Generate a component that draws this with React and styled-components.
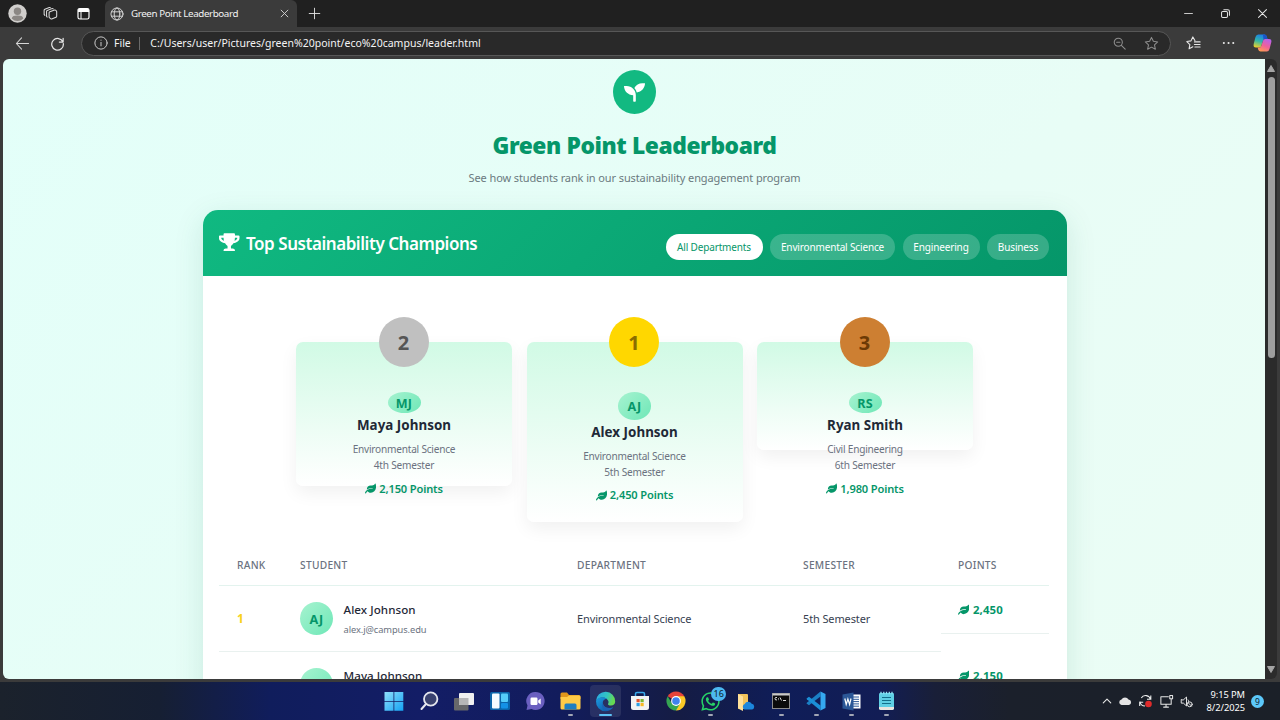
import React from "react";
import styled, { createGlobalStyle, css } from "styled-components";
import { FaSeedling, FaTrophy, FaLeaf, FaWhatsapp } from "react-icons/fa";

const Global = createGlobalStyle`
  * { box-sizing: border-box; }
  body { margin: 0; overflow: hidden; background: #3b3b3b; }
`;

const ui = `"Noto Sans", "Open Sans", sans-serif`;

const Desktop = styled.div`
  width: 1280px;
  height: 720px;
  display: flex;
  flex-direction: column;
  overflow: hidden;
  font-family: ${ui};
  background: #3b3b3b;
`;

/* ---------- browser chrome ---------- */
const TitleBar = styled.header`
  height: 27px;
  display: flex;
  align-items: center;
  background: #202020;
`;
const LeftTools = styled.div`
  width: 105px;
  height: 27px;
  padding-left: 1px;
  display: flex;
  align-items: center;
`;
const ToolSlot = styled.div`
  width: 33px;
  display: flex;
  justify-content: center;
`;
const Tab = styled.div`
  width: 192px;
  height: 27px;
  padding: 0 8px 0 5px;
  display: flex;
  align-items: center;
  border-radius: 6px 6px 0 0;
  background: #3b3b3b;
  color: #f2f2f2;
`;
const TabTitle = styled.span`
  flex: 1;
  margin-left: 7px;
  font-size: 9.8px;
  letter-spacing: -0.4px;
  white-space: nowrap;
`;
const NewTab = styled.div`
  margin-left: 11px;
  display: flex;
`;
const WindowButtons = styled.div`
  margin-left: auto;
  margin-right: 13.5px;
  display: flex;
  gap: 28px;
  align-items: center;
`;
const Toolbar = styled.div`
  height: 32px;
  display: flex;
  align-items: center;
  padding-left: 15px;
  background: #3b3b3b;
`;
const NavButtons = styled.div`
  width: 66px;
  display: flex;
  gap: 20px;
  align-items: center;
`;
const Address = styled.div`
  width: 1090px;
  height: 25px;
  padding: 0 11px 0 12px;
  display: flex;
  align-items: center;
  border: 1px solid #575757;
  border-radius: 13px;
  background: #292929;
  color: #f4f4f4;
  font-size: 10.5px;
`;
const Scheme = styled.span`
  margin-left: 6px;
`;
const Divider = styled.span`
  width: 1px;
  height: 13px;
  margin: 0 10px 0 8.5px;
  background: #6a6a6a;
`;
const Url = styled.span`
  flex: 1;
  letter-spacing: 0.015px;
  white-space: nowrap;
`;
const AddressActions = styled.div`
  display: flex;
  gap: 18px;
  align-items: center;
`;
const ToolbarActions = styled.div`
  display: flex;
  align-items: center;
  gap: 21px;
  margin-left: 15px;
  svg:last-child { margin-left: -3px; }
`;

/* ---------- viewport ---------- */
const Window = styled.div`
  height: 623px;
  padding: 0 3px 3px;
  display: flex;
`;
const Page = styled.main`
  width: 1262px;
  height: 620px;
  padding: 11px 0 0 1px;
  display: flex;
  flex-direction: column;
  align-items: center;
  overflow: hidden;
  border-radius: 6px 0 0 6px;
  background: linear-gradient(135deg, #e3fff9 0%, #e8fdf6 60%, #ebfdf5 100%);
`;
const Scrollbar = styled.div`
  width: 12px;
  height: 620px;
  padding: 6px 0 6px;
  display: flex;
  flex-direction: column;
  align-items: center;
  border-radius: 0 6px 6px 0;
  background: #2b2b2b;
`;
const ScrollThumb = styled.div`
  width: 7px;
  height: 281px;
  margin-top: 5px;
  margin-bottom: auto;
  border-radius: 4px;
  background: #9f9f9f;
`;
const Logo = styled.div`
  width: 43px;
  height: 44px;
  flex: none;
  display: flex;
  align-items: center;
  justify-content: center;
  border-radius: 50%;
  background: #12b981;
  color: #fff;
  font-size: 21px;
`;
const PageTitle = styled.h1`
  margin: 16px 0 0;
  font-size: 22.8px;
  line-height: 32px;
  font-weight: 900;
  letter-spacing: -0.42px;
  color: #059669;
  white-space: nowrap;
`;
const Subtitle = styled.p`
  margin: 6px 0 0;
  font-size: 11px;
  line-height: 19px;
  letter-spacing: -0.11px;
  color: #6b7a80;
  white-space: nowrap;
`;
const BoardShadow = styled.div`
  flex: none;
  border-radius: 15px;
  margin-top: 23px;
  box-shadow: 0 8px 30px rgba(5, 110, 80, 0.13);
`;
const Board = styled.section`
  width: 864px;
  height: 640px;
  border-radius: 15px 15px 0 0;
  overflow: hidden;
  background: #fff;
`;
const BoardHeader = styled.div`
  height: 66px;
  padding: 0 17.5px 0 16.5px;
  display: flex;
  justify-content: space-between;
  color: #fff;
  background: linear-gradient(135deg, #10b981 0%, #059669 100%);
`;
const BoardTitle = styled.h2`
  margin: 0;
  display: flex;
  align-items: center;
  gap: 6.5px;
  height: 66px;
  font-size: 17px;
  font-weight: 600;
  letter-spacing: -0.45px;
  white-space: nowrap;
  svg { font-size: 18.5px; width: 20.5px; position: relative; top: -1px; }
`;
const Filters = styled.div`
  display: flex;
  gap: 7.5px;
  padding-top: 23.5px;
`;
const Pill = styled.button`
  width: ${(p) => p.$w}px;
  height: 26px;
  padding: 0;
  border: 0;
  border-radius: 13px;
  font-family: inherit;
  font-size: 10px;
  letter-spacing: -0.15px;
  white-space: nowrap;
  background: ${(p) => (p.$active ? "#fff" : "rgba(255,255,255,0.2)")};
  color: ${(p) => (p.$active ? "#059669" : "#fff")};
`;

/* ---------- podium ---------- */
const Podium = styled.div`
  height: 246px;
  padding-top: 66px;
  display: flex;
  justify-content: center;
  gap: 14.5px;
`;
const PodiumCard = styled.article`
  position: relative;
  width: 216px;
  height: ${(p) => p.$h}px;
  padding-top: 50px;
  display: flex;
  flex-direction: column;
  align-items: center;
  border-radius: 7px;
  background: linear-gradient(to bottom, #d1fae5, #ffffff);
  box-shadow: 0 7px 18px rgba(0, 0, 0, 0.06);
  white-space: nowrap;
`;
const tones = {
  gold: ["#ffd700", "#8a6d00"],
  silver: ["#c0c0c0", "#555555"],
  bronze: ["#cd7f32", "#6b3a05"],
};
const RankBadge = styled.div`
  position: absolute;
  top: -25px;
  left: 82.5px;
  width: 50px;
  height: 50px;
  padding-top: 1px;
  border-radius: 50%;
  text-align: center;
  line-height: 50px;
  font-size: 20px;
  font-weight: 700;
  background: ${(p) => tones[p.$tone][0]};
  color: ${(p) => tones[p.$tone][1]};
`;
const Avatar = styled.div`
  width: 33px;
  height: ${(p) => p.$h}px;
  flex: none;
  padding-top: 1px;
  display: flex;
  align-items: center;
  justify-content: center;
  border-radius: 50%;
  background: linear-gradient(135deg, #a7f3d0, #6ee7b7);
  color: #059669;
  font-size: 12.6px;
  font-weight: 700;
  letter-spacing: 0.2px;
`;
const PodiumName = styled.h3`
  margin: 2px 0 0;
  font-size: 13.4px;
  line-height: 20px;
  font-weight: 700;
  letter-spacing: 0.02px;
  color: #1f2937;
`;
const PodiumInfo = styled.p`
  margin: 6px 0 0;
  text-align: center;
  font-size: 10.1px;
  line-height: 16.4px;
  letter-spacing: -0.22px;
  color: #6b7280;
`;
const PodiumPoints = styled.div`
  margin-top: 6px;
  display: flex;
  align-items: center;
  gap: 3px;
  line-height: 18px;
  font-size: 11.1px;
  font-weight: 600;
  letter-spacing: -0.14px;
  color: #059669;
`;

/* ---------- table ---------- */
const Table = styled.div`
  width: 830px;
  margin: 0 auto 0 16.5px;
`;
const Row = styled.div`
  display: grid;
  grid-template-columns: 63px 277px 226px 156px 108px;
  align-items: start;
`;
const HeadCell = styled.div`
  height: 41px;
  margin-top: 23px;
  padding-left: 18px;
  border-bottom: 1px solid #e3f3ee;
  font-size: 10.2px;
  line-height: 41px;
  font-weight: 500;
  letter-spacing: 0.28px;
  color: #6b7280;
  &:last-child { padding-left: 17px; }
`;
const Cell = styled.div`
  height: 66px;
  padding-left: 18px;
  display: flex;
  align-items: center;
  border-bottom: 1px solid #e9f1ef;
  font-size: 11px;
  letter-spacing: -0.12px;
  color: #374151;
  white-space: nowrap;
  ${(p) => p.$rank && css`color: ${p.$rank}; font-weight: 700; font-size: 12px;`}
`;
const PointsCell = styled(Cell)`
  height: 48px;
  padding-left: 17px;
  gap: 3.5px;
  font-size: 11.4px;
  letter-spacing: 0.15px;
  font-weight: 700;
  color: #059669;
`;
const Person = styled.div`
  margin-left: 10.5px;
  padding-top: 1px;
`;
const PersonName = styled.div`
  font-size: 11.6px;
  line-height: 20px;
  font-weight: 500;
  letter-spacing: 0.06px;
  color: #1f2937;
`;
const Email = styled.div`
  font-size: 9.3px;
  line-height: 19px;
  letter-spacing: -0.08px;
  color: #6b7280;
`;

/* ---------- taskbar ---------- */
const Taskbar = styled.footer`
  height: 38px;
  display: flex;
  align-items: center;
  background: linear-gradient(90deg, #1b222c 0, #161f33 160px, #101d5c 270px, #131d66 420px, #121c5c 560px, #151c44 680px, #0f1d58 780px, #121d55 880px, #191f38 935px, #1b202b 1010px, #1b2028 100%);
`;
const Apps = styled.div`
  display: flex;
  margin-left: 376.5px;
`;
const AppSlot = styled.div`
  position: relative;
  width: 35.2px;
  height: 38px;
  display: flex;
  align-items: center;
  justify-content: center;
  &::before {
    content: "";
    position: absolute;
    inset: 3px 2px 3px;
    border-radius: 4px;
    background: ${(p) => (p.$active ? "rgba(255,255,255,0.09)" : "none")};
  }
  &::after {
    content: "";
    position: absolute;
    bottom: 4px;
    width: ${(p) => (p.$active ? 13 : p.$open ? 5 : 0)}px;
    height: 2px;
    border-radius: 1px;
    background: ${(p) => (p.$active ? "#5cc3f7" : "#a2a6b5")};
  }
  svg { position: relative; }
`;
const Count = styled.span`
  position: absolute;
  top: 5px;
  left: 18px;
  width: 15px;
  height: 14px;
  border-radius: 7px;
  text-align: center;
  font-size: 9px;
  line-height: 14px;
  background: #4cb8f0;
  color: #0c1b2a;
`;
const Tray = styled.div`
  margin-left: auto;
  margin-right: 16px;
  display: flex;
  align-items: center;
  gap: 6px;
`;
const Clock = styled.div`
  width: 43px;
  margin-left: 3.5px;
  text-align: right;
  font-size: 9.3px;
  line-height: 13px;
  letter-spacing: -0.05px;
  color: #fff;
  white-space: nowrap;
`;
const Notice = styled.div`
  width: 13px;
  height: 13px;
  border-radius: 50%;
  text-align: center;
  font-size: 8.5px;
  line-height: 13px;
  background: #5cc8fa;
  color: #10202c;
`;

/* ---------- drawings ---------- */
const Line = ({ w = 14, h, vb = "0 0 16 16", c = "#e6e6e6", sw = 1.1, children }) => (
  <svg width={w} height={h || w} viewBox={vb} fill="none" stroke={c} strokeWidth={sw} strokeLinecap="round" strokeLinejoin="round">
    {children}
  </svg>
);
const Profile = () => (
  <svg width="19" height="19" viewBox="0 0 19 19">
    <circle cx="9.5" cy="9.5" r="9.2" fill="#d0cecc" />
    <circle cx="9.5" cy="7.3" r="3.7" fill="#8b8784" />
    <path d="M3.7 14.5c.5-2.4 2.4-3 5.8-3s5.300.6 5.800 3a7.800 7.800 0 0 1-11.600 0Z" fill="#8b8784" />
  </svg>
);
const Workspaces = () => (
  <Line w={15} c="#dcdcdc" sw={1.1}>
    <path d="M6.500 7.300q0-.8.800-1.100l5-1.900q1-.3 1.600.5l.7 1v5.200q0 .8-.8 1.100l-4.500 1.700q-1 .3-1.600-.5L6.500 12Z" />
    <path d="M4.500 11.800 3.800 11V5.800q0-.8.700-1.100l5-1.900q.8-.2 1.400.3M2 10 1.200 9V4.500q0-.8.800-1.100L6.700 1.600q.8-.2 1.300.3" />
  </Line>
);
const TabsIcon = () => (
  <svg width="13" height="13" viewBox="0 0 13 13">
    <rect x="1" y="1.500" width="11" height="10.500" rx="1.800" fill="none" stroke="#fff" strokeWidth="1.200" />
    <path d="M1 3.500q0-2 2-2h7q2 0 2 2V5H1Z" fill="#fff" />
    <path d="M4 5v7" stroke="#fff" strokeWidth="1" />
  </svg>
);
const Globe = () => (
  <Line w={14} c="#d8d8d8">
    <circle cx="8" cy="8" r="6.900" />
    <ellipse cx="8" cy="8" rx="3.200" ry="6.900" />
    <path d="M1.700 5.500h12.600M1.700 10.500h12.600" />
  </Line>
);
const Store = () => (
  <svg width="20" height="20" viewBox="0 0 20 20">
    <path d="M5.500 6V2.800Q5.500 1.500 7 1.500h6q1.500 0 1.500 1.300V6" fill="none" stroke="#39a9ea" strokeWidth="1.500" />
    <path d="M1 5h18v11.500q0 2.500-2.500 2.500h-13Q1 19 1 16.500Z" fill="#f3f3f3" />
    <path d="M6.500 8h3.200v3.200H6.500Z" fill="#e5532d" /><path d="M10.500 8h3.200v3.200h-3.200Z" fill="#7cb832" />
    <path d="M6.500 12h3.200v3.200H6.500Z" fill="#2ba0e4" /><path d="M10.500 12h3.200v3.200h-3.200Z" fill="#f8b824" />
  </svg>
);
const Start = () => (
  <svg width="20" height="20" viewBox="0 0 20 20">
    <defs><linearGradient id="win" x1="0" y1="0" x2="1" y2="1"><stop stopColor="#8fe0fb" /><stop offset="1" stopColor="#14a2f3" /></linearGradient></defs>
    <path d="M.5 1h9v9h-9ZM10.300 1h9v9h-9ZM.5 10.700h9v9h-9ZM10.300 10.700h9v9h-9Z" fill="url(#win)" />
  </svg>
);
const SearchIcon = () => (
  <svg width="20" height="20" viewBox="0 0 20 20">
    <circle cx="11.700" cy="8" r="6.700" fill="#39416f" stroke="#e4e6ee" strokeWidth="1.800" />
    <path d="m7 13-4.500 5" stroke="#e4e6ee" strokeWidth="2" strokeLinecap="round" />
  </svg>
);
const TaskView = () => (
  <svg width="20" height="19" viewBox="0 0 20 19">
    <rect x="0" y="6" width="14.500" height="12.500" rx="1" fill="#66676a" />
    <rect x="5" y="1" width="15" height="12" rx="1" fill="#f0f0f0" />
    <path d="M5 6h9.500v7H6q-1 0-1-1Z" fill="#b6b6b7" />
  </svg>
);
const Widgets = () => (
  <svg width="20" height="20" viewBox="0 0 20 20">
    <rect y="1" width="20" height="18" rx="1.500" fill="#0b64aa" />
    <rect x="2" y="2.500" width="7.500" height="15" rx="1" fill="#f4fbff" />
    <rect x="11" y="2.500" width="7" height="8.500" rx="1" fill="#55ccfa" />
    <rect x="11" y="12" width="7" height="5.500" rx="1" fill="#1491e6" />
  </svg>
);
const Chat = () => (
  <svg width="20" height="20" viewBox="0 0 20 20">
    <path d="M10.500 1a9 9 0 1 1-4 17L1.500 19l1-4.500A9 9 0 0 1 10.500 1Z" fill="#6a5fc0" />
    <rect x="5.500" y="6.500" width="7" height="7.500" rx="1.200" fill="#fff" />
    <path d="m13.200 9.500 2.500-2v6l-2.500-2Z" fill="#fff" />
  </svg>
);
const Folder = () => (
  <svg width="21" height="20" viewBox="0 0 21 20">
    <path d="M.5 3q0-1.500 1.500-1.500h5L9 4h10q1.500 0 1.500 1.500V8H.5Z" fill="#e0961b" />
    <path d="M.5 6H7l2-1.500h10q1.500 0 1.500 1.500v11q0 1.500-1.500 1.500H2Q.5 18.500.5 17Z" fill="#ffcb47" />
    <path d="M4.500 18.500V14q0-1.500 1.500-1.500h9q1.500 0 1.500 1.500v4.500Z" fill="#1f7fc2" />
  </svg>
);
const Edge = () => (
  <svg width="21" height="21" viewBox="0 0 21 21">
    <defs>
      <linearGradient id="edgeTop" x1="0" y1="0" x2="1" y2=".3"><stop stopColor="#2aa6e6" /><stop offset=".6" stopColor="#32c5c2" /><stop offset="1" stopColor="#66d951" /></linearGradient>
      <linearGradient id="edgeLow" x1="0" y1="0" x2="1" y2="1"><stop stopColor="#1b9de2" /><stop offset="1" stopColor="#0b4d9c" /></linearGradient>
    </defs>
    <path d="M1 10a9.600 9.600 0 0 1 19.200.5c0 2.600-1.900 4-4.200 4-2.100 0-3.300-.8-3-1.600.5-.8.700-1.500.5-2.500C12.800 7.500 9 5.500 5.500 6.800 3 7.700 1.500 9 1 10Z" fill="url(#edgeTop)" />
    <path d="M1 10c1-4 8-5.300 11-2-3.300-.2-4.700 2.300-4 5 .9 3.300 5.200 5.300 10.200 3.200a9.600 9.600 0 0 1-7.700 4A9.600 9.600 0 0 1 1 10Z" fill="url(#edgeLow)" />
    <path d="M7.800 12.500c.7 3.900 5.200 5.900 10.400 3.700-2 3.500-7 4.300-9.800 1.500-1.500-1.600-1.500-3.500-.6-5.200Z" fill="#1c62b4" />
  </svg>
);
const Chrome = () => (
  <svg width="20" height="20" viewBox="0 0 20 20">
    <path d="M10 10 1.700 5.200A9.600 9.600 0 0 1 18.300 5.200Z" fill="#e5443a" />
    <path d="M10 10V5.200h8.300A9.600 9.600 0 0 1 10 19.600Z" fill="#fbc926" />
    <path d="M1.700 5.200 5.900 12.400 10 14.600l4.100-2.200L10 19.600A9.600 9.600 0 0 1 1.700 5.200Z" fill="#35a552" />
    <circle cx="10" cy="10" r="4.900" fill="#fff" /><circle cx="10" cy="10" r="3.800" fill="#3f82ee" />
  </svg>
);
const OneDriveFolder = () => (
  <svg width="18" height="19" viewBox="0 0 18 19">
    <path d="M1 2h9q1 0 1 1v14H2q-1 0-1-1Z" fill="#f2c35b" /><path d="m1 2 5 2.500V19l-4-2q-1-.5-1-1Z" fill="#ffe19a" />
    <path d="M7.500 17.500a3 3 0 0 1 .2-5.500 4 4 0 0 1 7-.3 3 3 0 0 1 .5 5.800Z" fill="#1c87dc" />
  </svg>
);
const Terminal = () => (
  <svg width="18" height="16" viewBox="0 0 18 16">
    <rect x=".5" y=".5" width="17" height="15" fill="#0b0b0b" stroke="#8c8c8c" />
    <path d="M.5.500h17v2H.5Z" fill="#c9c9c9" />
    <path d="M5 4.500q-2-.5-2 1.200t2 1.200M6.500 5v.6m0 .9v.6M8 4.500l1.500 3M11 7.500h3" stroke="#f5f5f5" strokeWidth=".9" fill="none" />
  </svg>
);
const VsCode = () => (
  <svg width="20" height="20" viewBox="0 0 20 20">
    <path d="M14.500 5.500 3 14.200.8 12.800q-.5-.5 0-1.100L14.500.5Z" fill="#1a7fc4" />
    <path d="M14.500 14.500 3 5.800.8 7.200q-.5.500 0 1.100L14.500 19.500Z" fill="#1b8fd6" />
    <path d="M14.500.5 19.500 3v14l-5 2.500Z" fill="#35a9f0" />
  </svg>
);
const WordIcon = () => (
  <svg width="19" height="19" viewBox="0 0 19 19">
    <rect x="9" y="2.500" width="9.500" height="14" fill="#fff" />
    <path d="M11 5h6M11 7.300h6M11 9.600h6M11 11.900h6M11 14.200h6" stroke="#2b5797" strokeWidth="1" />
    <path d="m.5 2.500 11-2v18l-11-2Z" fill="#2b5797" />
    <path d="m2.800 6.500 1.400 6 1.700-5.500 1.700 5.500 1.400-6" fill="none" stroke="#fff" strokeWidth="1.200" />
  </svg>
);
const Notepad = () => (
  <svg width="17" height="20" viewBox="0 0 17 20">
    <rect x="1" y="2" width="15" height="16.500" rx="1.300" fill="#5fcfe4" />
    <path d="M1 16h15v1.300q0 1.700-1.500 1.700h-12Q1 19 1 17.300Z" fill="#e9e5df" />
    <path d="M3 .8v2.500M5.800.8v2.500M8.500.8v2.500M11.300.8v2.500M14 .8v2.500" stroke="#93e6f4" strokeWidth="1.300" />
    <path d="M4 6.500h9M4 9.500h9M4 12.500h9" stroke="#136f8a" strokeWidth="1.200" />
  </svg>
);
const Copilot = () => (
  <svg width="19" height="18" viewBox="0 0 19 18">
    <defs>
      <linearGradient id="cpA" x1=".5" y1="0" x2=".2" y2="1"><stop stopColor="#1c7ee6" /><stop offset=".5" stopColor="#32b7a8" /><stop offset="1" stopColor="#f2d026" /></linearGradient>
      <linearGradient id="cpB" x1=".8" y1="0" x2=".3" y2="1"><stop stopColor="#b562ef" /><stop offset=".55" stopColor="#f0609a" /><stop offset="1" stopColor="#ff9a52" /></linearGradient>
    </defs>
    <path d="M5.200.5h6.300q1.700 0 2.200 1.700L14.500 5h-2.300Q10.500 5 10 6.700L8.300 12q-.5 1.500-2 1.500H3Q0 13.500.7 10l1.800-7Q3.200.5 5.200.5Z" fill="url(#cpA)" />
    <path d="M10 .5h1.500q1.700 0 2.200 1.700L14.500 5h-2.300Q11 5 10.500 6Z" fill="#1a54c8" />
    <path d="M13.800 17.500H7.500q-1.700 0-2.200-1.700L4.600 13.500h1.700q1.500 0 2-1.500L10 6.700Q10.500 5 12.200 5H16q3 0 2.300 3.200L16.500 15q-.7 2.500-2.700 2.500Z" fill="url(#cpB)" />
  </svg>
);
const star = "m8 1.500 2 4.200 4.600.6-3.400 3.200.9 4.600L8 11.900l-4.100 2.200.9-4.600L1.400 6.300 6 5.700Z";

const podium = [
  { rank: 2, tone: "silver", h: 144, ah: 21, code: "MJ", name: "Maya Johnson", dept: "Environmental Science", sem: "4th Semester", pts: "2,150" },
  { rank: 1, tone: "gold", h: 180, ah: 27.6, code: "AJ", name: "Alex Johnson", dept: "Environmental Science", sem: "5th Semester", pts: "2,450" },
  { rank: 3, tone: "bronze", h: 108, ah: 21, code: "RS", name: "Ryan Smith", dept: "Civil Engineering", sem: "6th Semester", pts: "1,980" },
];
const rows = [
  { rank: 1, color: "#f8d21c", code: "AJ", name: "Alex Johnson", email: "alex.j@campus.edu", dept: "Environmental Science", sem: "5th Semester", pts: "2,450" },
  { rank: "", code: "", name: "Maya Johnson", email: "", dept: "", sem: "", pts: "2,150" },
];
const filters = [["All Departments", 97], ["Environmental Science", 125], ["Engineering", 77], ["Business", 62]];
const apps = [
  { icon: <Start /> }, { icon: <SearchIcon /> }, { icon: <TaskView /> }, { icon: <Widgets /> }, { icon: <Chat /> },
  { icon: <Folder />, open: true }, { icon: <Edge />, active: true }, { icon: <Store /> }, { icon: <Chrome /> },
  { icon: <FaWhatsapp size={21} color="#27d367" />, open: true, count: 16 },
  { icon: <OneDriveFolder /> }, { icon: <Terminal />, open: true }, { icon: <VsCode />, open: true },
  { icon: <WordIcon />, open: true }, { icon: <Notepad />, open: true },
];

export default function App() {
  return (
    <Desktop>
      <Global />
      <TitleBar>
        <LeftTools>
          <ToolSlot><Profile /></ToolSlot>
          <ToolSlot><Workspaces /></ToolSlot>
          <ToolSlot><TabsIcon /></ToolSlot>
        </LeftTools>
        <Tab>
          <Globe />
          <TabTitle>Green Point Leaderboard</TabTitle>
          <Line w={9} c="#d8d8d8" sw={1.6}><path d="m2 2 12 12M14 2 2 14" /></Line>
        </Tab>
        <NewTab><Line w={13}><path d="M8 1.500v13M1.500 8h13" /></Line></NewTab>
        <WindowButtons>
          <Line w={9} sw={1.5}><path d="M1 8h14" /></Line>
          <Line w={9} sw={1.8}><rect x="1" y="4.500" width="10.500" height="10.500" rx="2" /><path d="M5 1.300h7q3 0 3 3V11" /></Line>
          <Line w={9} sw={1.8}><path d="m1 1 14 14M15 1 1 15" /></Line>
        </WindowButtons>
      </TitleBar>
      <Toolbar>
        <NavButtons>
          <Line w={15} c="#d6d6d6"><path d="M7 2 1.500 8 7 14M1.500 8h13" /></Line>
          <Line w={15} c="#e6e6e6" sw={1.3}><path d="M13.800 6.500A6.200 6.200 0 1 0 14.200 8M14 2.500v4h-4" /></Line>
        </NavButtons>
        <Address>
          <Line w={14} c="#cfcfcf"><circle cx="8" cy="8" r="7" /><path d="M8 7.300v4M8 4.700v.2" /></Line>
          <Scheme>File</Scheme>
          <Divider />
          <Url>C:/Users/user/Pictures/green%20point/eco%20campus/leader.html</Url>
          <AddressActions>
            <Line w={13} c="#8d8d8d" sw={1.3}><circle cx="6.500" cy="6.500" r="5" /><path d="m10.300 10.300 4.700 4.700M4.500 6.500h4" /></Line>
            <Line w={15} c="#8d8d8d"><path d={star} /></Line>
          </AddressActions>
        </Address>
        <ToolbarActions>
          <Line w={15} sw={1.2}><path d="M9.500 4.800 7.300 1 5.300 5.200.9 5.900l3.200 3.200-.8 4.500 4-2.100M9 6.300h6M9 9h6M9.500 11.700H15" /></Line>
          <Line w={13} h={4} vb="0 0 13 4" sw={2}><path d="M1.800 2h.1M6.500 2h.1M11.200 2h.1" /></Line>
          <Copilot />
        </ToolbarActions>
      </Toolbar>
      <Window>
        <Page>
          <Logo><FaSeedling /></Logo>
          <PageTitle>Green Point Leaderboard</PageTitle>
          <Subtitle>See how students rank in our sustainability engagement program</Subtitle>
          <BoardShadow>
            <Board>
              <BoardHeader>
                <BoardTitle><FaTrophy />Top Sustainability Champions</BoardTitle>
                <Filters>
                  {filters.map(([label, w], i) => <Pill key={label} $w={w} $active={i === 0}>{label}</Pill>)}
                </Filters>
              </BoardHeader>
              <Podium>
                {podium.map((p) => (
                  <PodiumCard key={p.rank} $h={p.h}>
                    <RankBadge $tone={p.tone}>{p.rank}</RankBadge>
                    <Avatar $h={p.ah}>{p.code}</Avatar>
                    <PodiumName>{p.name}</PodiumName>
                    <PodiumInfo>{p.dept}<br />{p.sem}</PodiumInfo>
                    <PodiumPoints><FaLeaf />{p.pts} Points</PodiumPoints>
                  </PodiumCard>
                ))}
              </Podium>
              <Table>
                <Row>
                  {["RANK", "STUDENT", "DEPARTMENT", "SEMESTER", "POINTS"].map((h) => <HeadCell key={h}>{h}</HeadCell>)}
                </Row>
                {rows.map((r) => (
                  <Row key={r.name}>
                    <Cell $rank={r.color}>{r.rank}</Cell>
                    <Cell>
                      <Avatar $h={33}>{r.code}</Avatar>
                      <Person><PersonName>{r.name}</PersonName><Email>{r.email || "\u00a0"}</Email></Person>
                    </Cell>
                    <Cell>{r.dept}</Cell>
                    <Cell>{r.sem}</Cell>
                    <PointsCell><FaLeaf />{r.pts}</PointsCell>
                  </Row>
                ))}
              </Table>
            </Board>
          </BoardShadow>
        </Page>
        <Scrollbar>
          <svg width="8" height="7" viewBox="0 0 8 7"><path d="M4 .5 7.500 6.500h-7Z" fill="#a5a5a5" stroke="#a5a5a5" strokeLinejoin="round" /></svg>
          <ScrollThumb />
          <svg width="8" height="7" viewBox="0 0 8 7"><path d="M4 6.500.5.500h7Z" fill="#a5a5a5" stroke="#a5a5a5" strokeLinejoin="round" /></svg>
        </Scrollbar>
      </Window>
      <Taskbar>
        <Apps>
          {apps.map((a, i) => (
            <AppSlot key={i} $open={a.open} $active={a.active}>
              {a.icon}
              {a.count && <Count>{a.count}</Count>}
            </AppSlot>
          ))}
        </Apps>
        <Tray>
          <Line w={10} sw={1.8}><path d="m2 11 6-6 6 6" /></Line>
          <svg width="14" height="10" viewBox="0 0 14 10"><path d="M3.500 9a2.800 2.800 0 0 1 0-5.500A4 4 0 0 1 10.500 3.500 2.800 2.800 0 0 1 11 9Z" fill="#e4e4e4" /></svg>
          <svg width="15" height="14" viewBox="0 0 15 14">
            <path d="M12.500 5.500A5 5 0 0 0 3.300 4M12.800 1.500v3.700H9M2 7.500A5 5 0 0 0 7 12M1.700 12V8.300h3.500" fill="none" stroke="#eee" strokeWidth="1.100" />
            <circle cx="10.500" cy="10" r="3.300" fill="#e02b2b" />
          </svg>
          <Line w={15} sw={1.100}><path d="M10 3H2v8h11V7.500M5 14h5M7.500 11v3M11.500 1.500h3v3.500h-3ZM13 5v2.500" /></Line>
          <Line w={13} sw={1.2}><path d="M1.500 6v4h2.700L8 13.500v-11L4.200 6ZM10 6a3 3 0 0 1 .7 2" /><circle cx="12" cy="11.500" r="3" /><path d="m10 9.500 4 4" /></Line>
          <Clock>9:15 PM<br />8/2/2025</Clock>
          <Notice>9</Notice>
        </Tray>
      </Taskbar>
    </Desktop>
  );
}
